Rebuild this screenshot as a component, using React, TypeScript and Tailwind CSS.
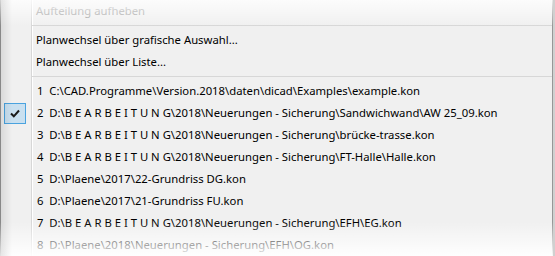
const files = [
  "C:\\CAD.Programme\\Version.2018\\daten\\dicad\\Examples\\example.kon",
  "D:\\B E A R B E I T U N G\\2018\\Neuerungen - Sicherung\\Sandwichwand\\AW 25_09.kon",
  "D:\\B E A R B E I T U N G\\2018\\Neuerungen - Sicherung\\brücke-trasse.kon",
  "D:\\B E A R B E I T U N G\\2018\\Neuerungen - Sicherung\\FT-Halle\\Halle.kon",
  "D:\\Plaene\\2017\\22-Grundriss DG.kon",
  "D:\\Plaene\\2017\\21-Grundriss FU.kon",
  "D:\\B E A R B E I T U N G\\2018\\Neuerungen - Sicherung\\EFH\\EG.kon",
  "D:\\Plaene\\2018\\Neuerungen - Sicherung\\EFH\\OG.kon",
];

const Separator = () => (
  <div className="flex h-[7px]">
    <div className="w-[31px] shrink-0" />
    <div className="flex-1 flex items-center">
      <div className="h-px w-full bg-[#d7d7d7]" />
    </div>
  </div>
);

const Item = ({
  children,
  checked = false,
  disabled = false,
}: {
  children: React.ReactNode;
  checked?: boolean;
  disabled?: boolean;
}) => (
  <div className="flex h-[22px] items-center">
    <div className="w-[31px] shrink-0 flex items-center pl-[3px]">
      {checked && (
        <div className="w-[22px] h-[21px] border border-[#4aa3df] bg-[#c9e0f0] flex items-center justify-center">
          <svg width="10" height="9" viewBox="0 0 10 9">
            <path d="M1 4.5 L3.8 7.3 L9 1.5" fill="none" stroke="#1a1a1a" strokeWidth="2" />
          </svg>
        </div>
      )}
    </div>
    <div
      className={
        "pl-[4px] whitespace-nowrap " +
        (disabled ? "text-[#a0a0a0]" : "text-black")
      }
    >
      {children}
    </div>
  </div>
);

export default function App() {
  return (
    <div
      className="relative w-[555px] h-[256px] overflow-hidden bg-[#f0f0f0] text-[11.3px] leading-none"
      style={{ fontFamily: '"Noto Sans", "Open Sans", sans-serif' }}
    >
      <div className="relative h-full border-l border-[#979797] mr-[2px] border-r">
        <div className="absolute left-[30px] top-0 bottom-0 w-px bg-[#d7d7d7]" />
        <div className="absolute left-[31px] top-0 bottom-0 w-px bg-white" />
        <div className="relative">
          <Item disabled>Aufteilung aufheben</Item>
          <Separator />
          <Item>Planwechsel über grafische Auswahl...</Item>
          <Item>Planwechsel über Liste...</Item>
          <Separator />
          {files.map((f, i) => (
            <Item key={i} checked={i === 1}>
              <span className="pl-px">
                {i + 1}&nbsp;&nbsp;{f}
              </span>
            </Item>
          ))}
        </div>
      </div>
      {/* fades over the cut-off menu */}
      <div className="absolute inset-x-0 top-0 h-[26px] bg-gradient-to-b from-white/80 to-white/0 pointer-events-none" />
      <div className="absolute inset-x-0 bottom-0 h-[34px] bg-gradient-to-t from-white/95 to-white/0 pointer-events-none" />
      <div className="absolute left-0 inset-y-0 w-[12px] bg-gradient-to-r from-black/10 to-black/0 pointer-events-none" />
      <div className="absolute right-0 inset-y-0 w-[2px] bg-[#d0d0d0] pointer-events-none" />
    </div>
  );
}
